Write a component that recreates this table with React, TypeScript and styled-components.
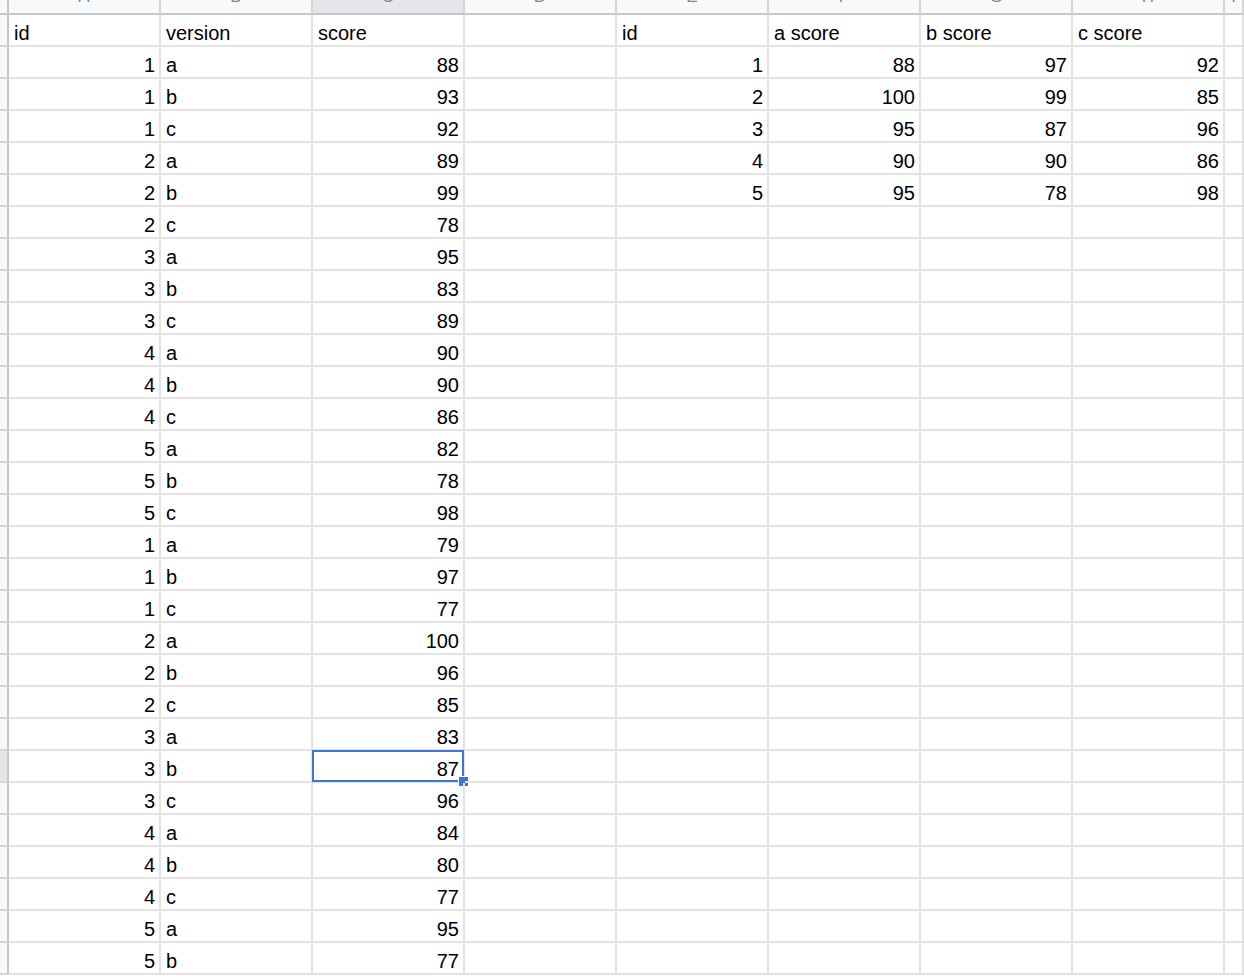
import { FC } from 'react';
import styled, { createGlobalStyle } from 'styled-components';

const GlobalStyle = createGlobalStyle`
  html, body {
    margin: 0;
    padding: 0;
    background: #ffffff;
    overflow: hidden;
  }
  body {
    font-family: "Liberation Sans", Arial, sans-serif;
  }
`;

// Sheet grid: row header sliver, 8 visible columns, last column cut off
const Sheet = styled.div`
  width: 1244px;
  height: 976px;
  overflow: hidden;
  background: #ffffff;
`;

const Row = styled.div`
  display: grid;
  grid-template-columns: 9px repeat(8, 152px) 1fr;
`;

const Corner = styled.div`
  height: 15px;
  background: #f8f9fa;
  border-right: 2px solid #c4c7c5;
  border-bottom: 2px solid #c4c7c5;
  box-sizing: border-box;
`;

const ColHeader = styled.div<{ $active?: boolean }>`
  height: 15px;
  overflow: hidden;
  display: flex;
  justify-content: center;
  align-items: flex-start;
  background: ${p => (p.$active ? '#e4e6e9' : '#f8f9fa')};
  border-right: 2px solid #d3d5d7;
  border-bottom: 2px solid #c4c7c5;
  box-sizing: border-box;
`;

// column letters sit mostly above the visible area; only their feet show
const ColLetter = styled.span`
  font-size: 17px;
  line-height: 17px;
  margin-top: -12px;
  color: #80868b;
`;

const RowHeader = styled.div<{ $active?: boolean }>`
  height: 32px;
  background: ${p => (p.$active ? '#e4e6e9' : '#f8f9fa')};
  border-right: 2px solid #c4c7c5;
  border-bottom: 2px solid #d3d5d7;
  box-sizing: border-box;
`;

const Cell = styled.div<{ $num?: boolean }>`
  position: relative;
  height: 32px;
  display: flex;
  align-items: flex-end;
  justify-content: ${p => (p.$num ? 'flex-end' : 'flex-start')};
  padding: 0 4px 0 5px;
  border-right: 2px solid #e2e2e2;
  border-bottom: 2px solid #e2e2e2;
  box-sizing: border-box;
  font-size: 20px;
  line-height: 23px;
  color: #000000;
  white-space: nowrap;
`;

const Selection = styled.div`
  position: absolute;
  left: -1px;
  top: -1px;
  right: -1px;
  bottom: -1px;
  border: 2px solid #3f75d9;
  pointer-events: none;
`;

const Handle = styled.div`
  position: absolute;
  right: -7px;
  bottom: -7px;
  width: 9px;
  height: 9px;
  background: #3f75d9;
  border: 1px solid #ffffff;
`;

const letters = ['A', 'B', 'C', 'D', 'E', 'F', 'G', 'H', 'I'];

const scores = [
  88, 93, 92, 89, 99, 78, 95, 83, 89, 90, 90, 86, 82, 78, 98,
  79, 97, 77, 100, 96, 85, 83, 87, 96, 84, 80, 77, 95, 77,
];
const versions = ['a', 'b', 'c'];
const longData = scores.map((score, i) => ({
  id: (Math.floor(i / 3) % 5) + 1,
  version: versions[i % 3],
  score,
}));

const wideData = [
  { id: 1, a: 88, b: 97, c: 92 },
  { id: 2, a: 100, b: 99, c: 85 },
  { id: 3, a: 95, b: 87, c: 96 },
  { id: 4, a: 90, b: 90, c: 86 },
  { id: 5, a: 95, b: 78, c: 98 },
];

const SELECTED_ROW = 22;

type CellValue = { text: string | number; num?: boolean };

const App: FC = () => {
  const rows: CellValue[][] = [];

  rows.push([
    { text: 'id' },
    { text: 'version' },
    { text: 'score' },
    { text: '' },
    { text: 'id' },
    { text: 'a score' },
    { text: 'b score' },
    { text: 'c score' },
    { text: '' },
  ]);

  longData.forEach((d, i) => {
    const w = wideData[i];
    rows.push([
      { text: d.id, num: true },
      { text: d.version },
      { text: d.score, num: true },
      { text: '' },
      { text: w ? w.id : '', num: true },
      { text: w ? w.a : '', num: true },
      { text: w ? w.b : '', num: true },
      { text: w ? w.c : '', num: true },
      { text: '' },
    ]);
  });

  return (
    <>
      <GlobalStyle />
      <Sheet>
        <Row>
          <Corner />
          {letters.map(l => (
            <ColHeader key={l} $active={l === 'C'}>
              <ColLetter>{l}</ColLetter>
            </ColHeader>
          ))}
        </Row>
        {rows.map((cells, r) => {
          const activeRow = r === SELECTED_ROW + 1;
          return (
            <Row key={r}>
              <RowHeader $active={activeRow} />
              {cells.map((c, ci) => (
                <Cell key={ci} $num={c.num}>
                  {c.text}
                  {activeRow && ci === 2 && (
                    <Selection>
                      <Handle />
                    </Selection>
                  )}
                </Cell>
              ))}
            </Row>
          );
        })}
      </Sheet>
    </>
  );
};

export default App;
